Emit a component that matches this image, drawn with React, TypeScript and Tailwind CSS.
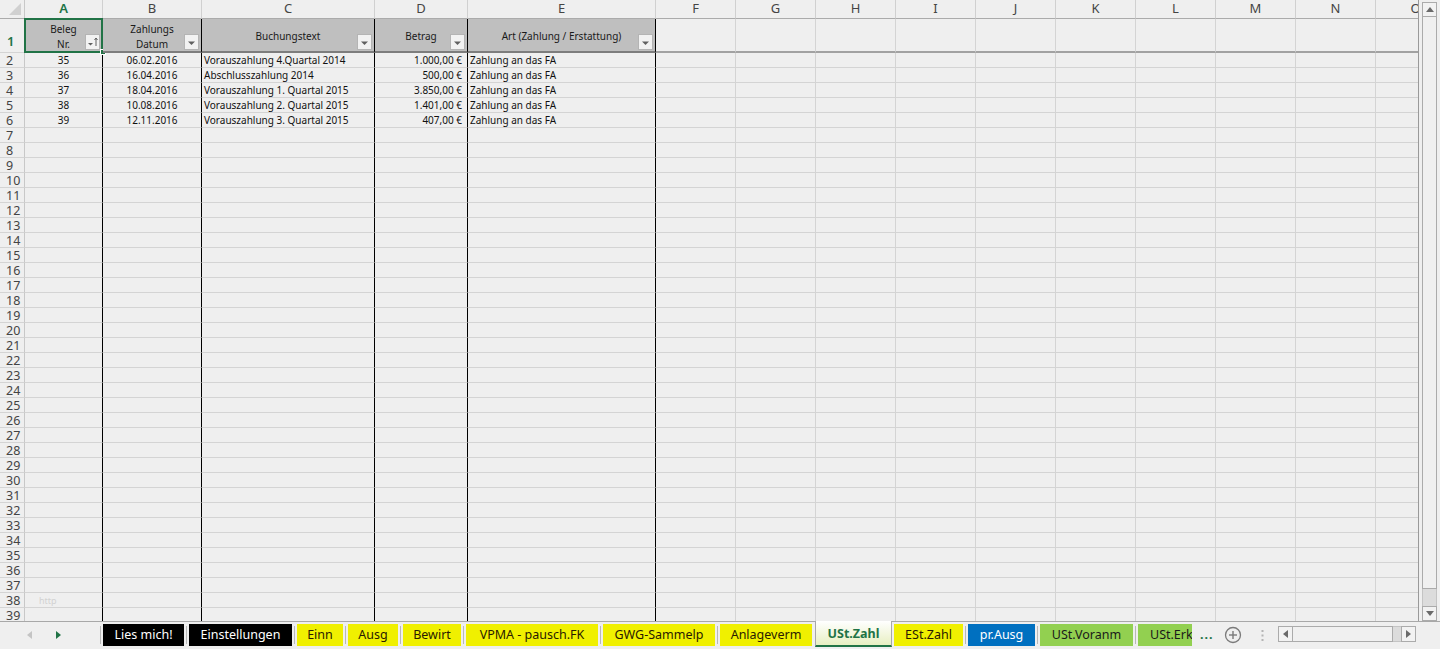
import type { ReactNode } from "react";

const LETTERS = ["A", "B", "C", "D", "E", "F", "G", "H", "I", "J", "K", "L", "M", "N", "O"];

const HEADERS: ReactNode[] = [
  <>Beleg<br />Nr.</>,
  <>Zahlungs<br />Datum</>,
  "Buchungstext",
  "Betrag",
  "Art (Zahlung / Erstattung)",
];

const ROWS = [
  ["35", "06.02.2016", "Vorauszahlung 4.Quartal 2014", "1.000,00 €", "Zahlung an das FA"],
  ["36", "16.04.2016", "Abschlusszahlung 2014", "500,00 €", "Zahlung an das FA"],
  ["37", "18.04.2016", "Vorauszahlung 1. Quartal 2015", "3.850,00 €", "Zahlung an das FA"],
  ["38", "10.08.2016", "Vorauszahlung 2. Quartal 2015", "1.401,00 €", "Zahlung an das FA"],
  ["39", "12.11.2016", "Vorauszahlung 3. Quartal 2015", "407,00 €", "Zahlung an das FA"],
];

const TABS = [
  { label: "Lies mich!", w: "w-[81px]", cls: "bg-black text-white" },
  { label: "Einstellungen", w: "w-[103px]", cls: "bg-black text-white" },
  { label: "Einn", w: "w-[46px]", cls: "bg-[#f0f000] text-[#2a1a00]" },
  { label: "Ausg", w: "w-[50px]", cls: "bg-[#f0f000] text-[#2a1a00]" },
  { label: "Bewirt", w: "w-[58px]", cls: "bg-[#f0f000] text-[#2a1a00]" },
  { label: "VPMA - pausch.FK", w: "w-[132px]", cls: "bg-[#f0f000] text-[#2a1a00]" },
  { label: "GWG-Sammelp", w: "w-[112px]", cls: "bg-[#f0f000] text-[#2a1a00]" },
  { label: "Anlageverm", w: "w-[92px]", cls: "bg-[#f0f000] text-[#2a1a00]" },
];

const TABS2 = [
  { label: "pr.Ausg", w: "w-[67px]", cls: "bg-[#0070c0] text-white" },
  { label: "USt.Voranm", w: "w-[93px]", cls: "bg-[#92d050] text-[#1a1a1a]" },
];

function colBorder(c: number) {
  return c >= 1 && c <= 5 ? "border-r-black" : "border-r-[#d4d4d4]";
}

function FilterButton({ sorted }: { sorted?: boolean }) {
  return (
    <div className="absolute right-[2px] bottom-[1px] flex h-[16px] w-[15px] items-center justify-center border border-[#b4b4b4] bg-[#f2f2f2]">
      {sorted ? (
        <svg width="13" height="14" viewBox="0 0 13 14">
          <polygon points="2,8 7,8 4.5,10.5" fill="#606060" />
          <line x1="10" y1="3" x2="10" y2="11" stroke="#606060" strokeWidth="1" />
          <polyline points="8.5,5 10,3 11.5,5" fill="none" stroke="#606060" strokeWidth="1" />
        </svg>
      ) : (
        <svg width="13" height="14" viewBox="0 0 13 14">
          <polygon points="3,6.5 10,6.5 6.5,10" fill="#606060" />
        </svg>
      )}
    </div>
  );
}

function Sep() {
  return (
    <div className="flex h-[22px] w-[5px] items-center justify-center">
      <div className="h-[18px] w-px bg-[#b8b8b8]" />
    </div>
  );
}

export default function App() {
  const cells: ReactNode[] = [];

  // column letters
  cells.push(
    <div key="corner" className="relative border-r border-b border-r-[#c8c8c8] border-b-[#ababab]">
      <svg className="absolute right-[3px] bottom-[3px]" width="12" height="12" viewBox="0 0 12 12">
        <polygon points="12,0 12,12 0,12" fill="#d0d0d0" />
      </svg>
    </div>
  );
  LETTERS.forEach((l, i) => {
    cells.push(
      <div
        key={"h" + l}
        className={
          "flex items-center justify-center border-r border-b border-r-[#d0d0d0] text-[13px] " +
          (i === 0 ? "border-b-[#217346] font-semibold text-[#217346]" : "border-b-[#ababab] text-[#444]")
        }
      >
        {l}
      </div>
    );
  });

  // row 1 (table header)
  cells.push(
    <div key="r1" className="flex items-end border-r border-b border-r-[#c8c8c8] border-b-[#d4d4d4] pb-[4px] pl-[7px] text-[13px] font-semibold leading-none text-[#217346]">
      1
    </div>
  );
  LETTERS.forEach((l, i) => {
    const c = i + 1;
    if (c <= 5) {
      cells.push(
        <div
          key={"1" + l}
          className={"relative flex items-center justify-center border-r border-b-2 border-b-[#7d7d7d] bg-[#bfbfbf] pt-[3px] text-center text-[10px] leading-[15px] text-[#1a1a1a] " + colBorder(c)}
        >
          <span>{HEADERS[i]}</span>
          <FilterButton sorted={c === 1} />
          {c === 1 && (
            <>
              <div className="pointer-events-none absolute -top-px -right-px -bottom-[2px] -left-px border-2 border-[#217346]" />
              <div className="absolute -right-[4px] -bottom-[4px] h-[6px] w-[6px] border border-white bg-[#217346]" />
            </>
          )}
        </div>
      );
    } else {
      cells.push(<div key={"1" + l} className={"border-r border-b-2 border-b-[#a2a2a2] " + colBorder(c)} />);
    }
  });

  // rows 2..39
  for (let r = 2; r <= 39; r++) {
    const data = ROWS[r - 2];
    cells.push(
      <div key={"rh" + r} className="flex items-center border-r border-b border-r-[#c8c8c8] border-b-[#d4d4d4] pt-px pl-[6px] text-[12.5px] leading-[12px] text-[#444]">
        {r}
      </div>
    );
    LETTERS.forEach((l, i) => {
      const c = i + 1;
      let content: ReactNode = null;
      let align = "";
      if (data && c <= 5) {
        content = data[i];
        if (c === 1 || c === 2) align = "justify-center";
        else if (c === 4) align = "justify-end pr-[5px]";
        else align = "pl-[2px]";
      }
      if (r === 38 && c === 1) {
        content = <span className="text-[9px] text-[#d2d2d2]">http</span>;
        align = "pl-[14px]";
      }
      cells.push(
        <div
          key={r + l}
          className={"flex items-center whitespace-nowrap border-r border-b border-b-[#d4d4d4] pt-px text-[10px] leading-[11px] text-[#111] " + colBorder(c) + " " + align}
        >
          {content}
        </div>
      );
    });
  }

  return (
    <div className="flex h-[649px] w-[1440px] flex-col overflow-hidden bg-[#efefef] font-['Noto_Sans','Lato',sans-serif]">
      <div className="flex h-[621px] shrink-0">
        <div className="h-[621px] w-[1419px] overflow-hidden border-r border-r-[#9a9a9a]">
          <div className="grid w-[1456px] grid-cols-[25px_78px_99px_173px_93px_188px_repeat(10,80px)] grid-rows-[19px_34px_repeat(38,15px)]">
            {cells}
          </div>
        </div>
        {/* vertical scrollbar */}
        <div className="flex w-[21px] flex-col pt-[2px] pl-[3px] pr-[3px]">
          <div className="flex h-[15px] items-center justify-center border border-[#ababab] bg-[#f2f2f2]">
            <svg width="8" height="5" viewBox="0 0 8 5"><polygon points="0,5 8,5 4,0" fill="#6a6a6a" /></svg>
          </div>
          <div className="h-[572px] border-x border-b border-[#ababab] bg-[#f0f0f0]" />
          <div className="h-[17px] border-x border-[#c4c4c4] bg-[#dcdcdc]" />
          <div className="flex h-[15px] items-center justify-center border border-[#ababab] bg-[#f2f2f2]">
            <svg width="8" height="5" viewBox="0 0 8 5"><polygon points="0,0 8,0 4,5" fill="#6a6a6a" /></svg>
          </div>
        </div>
      </div>

      {/* sheet tabs */}
      <div className="flex h-[28px] items-start border-t border-t-[#a8a8a8] pt-[2px] text-[12.5px]">
        <div className="flex h-[22px] w-[100px] items-center">
          <svg className="ml-[27px]" width="5" height="8" viewBox="0 0 5 8"><polygon points="5,0 5,8 0,4" fill="#c4c4c4" /></svg>
          <svg className="ml-[24px]" width="5" height="8" viewBox="0 0 5 8"><polygon points="0,0 0,8 5,4" fill="#217346" /></svg>
        </div>
        <div className="flex h-[22px] w-[3px] items-center">
          <div className="h-[18px] w-px bg-[#b8b8b8]" />
        </div>
        {TABS.map((t, i) => (
          <div key={t.label} className="flex">
            <div className={"flex h-[22px] items-center justify-center whitespace-nowrap " + t.w + " " + t.cls}>{t.label}</div>
            {i < TABS.length - 1 && <Sep />}
          </div>
        ))}
        <div className="w-[3px]" />
        <div className="-mt-[3px] flex h-[26px] w-[77px] items-center justify-center border-x border-x-[#a8a8a8] border-b-2 border-b-[#217346] bg-gradient-to-b from-white to-[#e8efc2] pt-[2px] font-bold text-[#217346]">
          USt.Zahl
        </div>
        <div className="w-[2px]" />
        <div className="flex h-[22px] w-[69px] items-center justify-center bg-[#f0f000] text-[#2a1a00]">ESt.Zahl</div>
        <Sep />
        {TABS2.map((t) => (
          <div key={t.label} className="flex">
            <div className={"flex h-[22px] items-center justify-center whitespace-nowrap " + t.w + " " + t.cls}>{t.label}</div>
            <Sep />
          </div>
        ))}
        <div className="flex h-[22px] w-[54px] items-center overflow-hidden whitespace-nowrap bg-[#92d050] pl-[12px] text-[#1a1a1a]">USt.Erkl</div>
        <div className="ml-[8px] flex h-[22px] items-center font-bold tracking-[1px] text-[#217346]">...</div>
        <div className="ml-[10px] flex h-[22px] items-center">
          <svg width="18" height="18" viewBox="0 0 18 18">
            <circle cx="9" cy="9" r="7.5" fill="none" stroke="#7a7a7a" strokeWidth="1.3" />
            <line x1="9" y1="5" x2="9" y2="13" stroke="#7a7a7a" strokeWidth="1.4" />
            <line x1="5" y1="9" x2="13" y2="9" stroke="#7a7a7a" strokeWidth="1.4" />
          </svg>
        </div>
        <div className="ml-[19px] flex h-[22px] items-center">
          <svg width="3" height="11" viewBox="0 0 3 11">
            <rect x="0.5" y="0" width="2" height="2" fill="#b4b4b4" />
            <rect x="0.5" y="4.5" width="2" height="2" fill="#b4b4b4" />
            <rect x="0.5" y="9" width="2" height="2" fill="#b4b4b4" />
          </svg>
        </div>
        {/* horizontal scrollbar */}
        <div className="mt-[2px] ml-[14px] flex h-[16px] w-[138px]">
          <div className="flex w-[15px] items-center justify-center border border-[#ababab] bg-[#f2f2f2]">
            <svg width="5" height="8" viewBox="0 0 5 8"><polygon points="5,0 5,8 0,4" fill="#6a6a6a" /></svg>
          </div>
          <div className="w-[100px] border-y border-r border-[#ababab] bg-[#f0f0f0]" />
          <div className="w-[8px] border-y border-[#c4c4c4] bg-[#dcdcdc]" />
          <div className="flex w-[15px] items-center justify-center border border-[#ababab] bg-[#f2f2f2]">
            <svg width="5" height="8" viewBox="0 0 5 8"><polygon points="0,0 0,8 5,4" fill="#6a6a6a" /></svg>
          </div>
        </div>
      </div>
    </div>
  );
}
